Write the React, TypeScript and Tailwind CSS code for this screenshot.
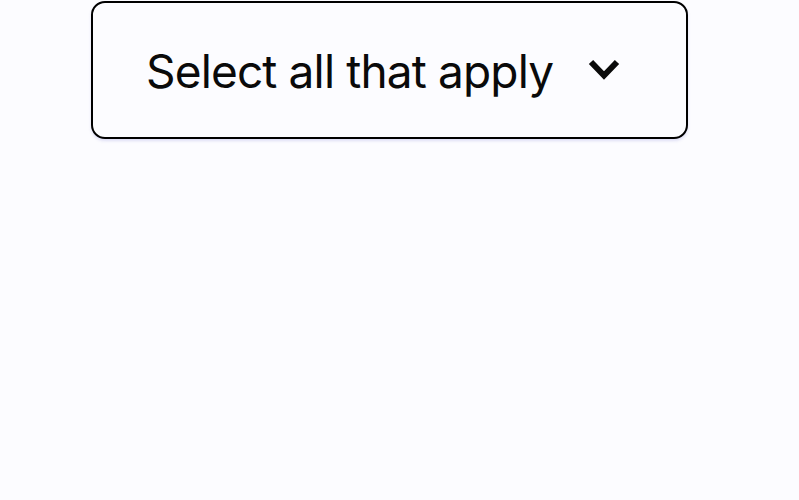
export default function App() {
  return (
    <div className="min-h-[500px] w-full bg-[#fcfcff] pt-[1px]" style={{ fontFamily: 'Inter, "Noto Sans", sans-serif' }}>
      <button
        type="button"
        className="ml-[91px] flex h-[138px] w-[597px] items-center rounded-[14px] border-[2.5px] border-black bg-[#fcfcff] pl-[53px] pr-[66px] shadow-[0_2px_3px_rgba(90,90,200,0.18)]"
      >
        <span className="pt-[2px] text-[46px] leading-none tracking-[-0.85px] text-[#0a0a0a]">Select all that apply</span>
        <svg className="ml-auto" width="32" height="22" viewBox="0 0 32 22" fill="none" aria-hidden="true">
          <polyline points="3,3 16,16.5 29,3" stroke="#0a0a0a" strokeWidth="6" strokeLinecap="butt" strokeLinejoin="miter" />
        </svg>
      </button>
    </div>
  )
}
